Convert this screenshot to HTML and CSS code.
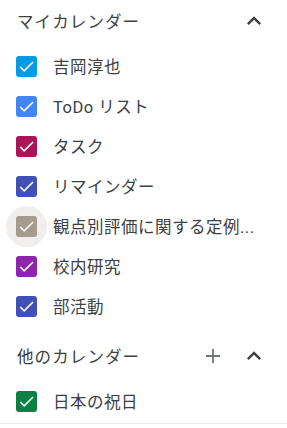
FILE: index.html
```html
<!DOCTYPE html>
<html lang="ja">
<head>
<meta charset="utf-8">
<link rel="stylesheet" href="styles.css">
</head>
<body>
<div class="panel">
  <section class="section">
    <div class="head">
      <span class="title">マイカレンダー</span>
      <span class="btn"><svg class="chev" viewBox="0 0 24 24"><path d="M12 8l-6 6 1.41 1.41L12 10.83l4.59 4.58L18 14z"/></svg></span>
    </div>
    <ul class="list first">
      <li class="item"><span class="hit"><span class="cb" style="--c:#039be5"><svg viewBox="0 0 24 24"><path d="M9 16.17L4.83 12l-1.42 1.41L9 19 21 7l-1.41-1.41z"/></svg></span></span><span class="label">吉岡淳也</span></li>
      <li class="item"><span class="hit"><span class="cb" style="--c:#4285f4"><svg viewBox="0 0 24 24"><path d="M9 16.17L4.83 12l-1.42 1.41L9 19 21 7l-1.41-1.41z"/></svg></span></span><span class="label">ToDo リスト</span></li>
      <li class="item"><span class="hit"><span class="cb" style="--c:#ad1457"><svg viewBox="0 0 24 24"><path d="M9 16.17L4.83 12l-1.42 1.41L9 19 21 7l-1.41-1.41z"/></svg></span></span><span class="label">タスク</span></li>
      <li class="item"><span class="hit"><span class="cb" style="--c:#3f51b5"><svg viewBox="0 0 24 24"><path d="M9 16.17L4.83 12l-1.42 1.41L9 19 21 7l-1.41-1.41z"/></svg></span></span><span class="label">リマインダー</span></li>
      <li class="item"><span class="hit hover"><span class="cb" style="--c:#a79b8e"><svg viewBox="0 0 24 24"><path d="M9 16.17L4.83 12l-1.42 1.41L9 19 21 7l-1.41-1.41z"/></svg></span></span><span class="label">観点別評価に関する定例...</span></li>
      <li class="item"><span class="hit"><span class="cb" style="--c:#8e24aa"><svg viewBox="0 0 24 24"><path d="M9 16.17L4.83 12l-1.42 1.41L9 19 21 7l-1.41-1.41z"/></svg></span></span><span class="label">校内研究</span></li>
      <li class="item"><span class="hit"><span class="cb" style="--c:#3f51b5"><svg viewBox="0 0 24 24"><path d="M9 16.17L4.83 12l-1.42 1.41L9 19 21 7l-1.41-1.41z"/></svg></span></span><span class="label">部活動</span></li>
    </ul>
  </section>
  <section class="section other">
    <div class="head">
      <span class="title">他のカレンダー</span>
      <span class="btn"><svg class="plus" viewBox="0 0 24 24"><path d="M19 12.9h-6.1V19h-1.8v-6.1H5v-1.8h6.1V5h1.8v6.1H19z"/></svg></span>
      <span class="btn"><svg class="chev" viewBox="0 0 24 24"><path d="M12 8l-6 6 1.41 1.41L12 10.83l4.59 4.58L18 14z"/></svg></span>
    </div>
    <ul class="list second">
      <li class="item"><span class="hit"><span class="cb" style="--c:#0b8043"><svg viewBox="0 0 24 24"><path d="M9 16.17L4.83 12l-1.42 1.41L9 19 21 7l-1.41-1.41z"/></svg></span></span><span class="label">日本の祝日</span></li>
    </ul>
  </section>
</div>
</body>
</html>
```
FILE: styles.css
```css
html, body {
  margin: 0;
  padding: 0;
  background: #ffffff;
}
body {
  font-family: Roboto, "Noto Sans CJK JP", "Noto Sans", sans-serif;
  color: #3c4043;
  width: 287px;
  height: 428px;
  overflow: hidden;
}
.panel {
  display: flex;
  flex-direction: column;
}
.head {
  display: flex;
  align-items: center;
  height: 42px;
  padding: 0 13px 0 17px;
}
.other .head {
  margin-top: 9px;
}
.title {
  flex: 1;
  font-size: 16.5px;
  letter-spacing: 1.1px;
  color: #3c4043;
}
.btn {
  width: 40px;
  height: 40px;
  display: flex;
  align-items: center;
  justify-content: center;
}
.btn + .btn {
  margin-left: 1px;
}
.chev {
  width: 28px;
  height: 28px;
  fill: #3c4043;
}
.plus {
  width: 24px;
  height: 24px;
  fill: #70757a;
}
.list {
  list-style: none;
  margin: 0;
  padding: 0;
}
.list.first {
  padding-top: 4px;
}
.list.second {
  padding-top: 4px;
  padding-bottom: 2px;
  border-bottom: 1px solid #e8eaed;
}
.item {
  display: flex;
  align-items: center;
  height: 40px;
  padding-left: 6px;
  padding-right: 20px;
}
.hit {
  flex: none;
  width: 41px;
  height: 41px;
  border-radius: 50%;
  display: flex;
  align-items: center;
  justify-content: center;
}
.hit.hover {
  background: #f1efed;
}
.cb {
  flex: none;
  width: 21px;
  height: 21px;
  border-radius: 3px;
  background: var(--c);
  display: flex;
  align-items: center;
  justify-content: center;
}
.cb svg {
  width: 19px;
  height: 19px;
  fill: #ffffff;
}
.label {
  margin-left: 6px;
  font-size: 16.5px;
  letter-spacing: 0.5px;
  white-space: nowrap;
}
```
